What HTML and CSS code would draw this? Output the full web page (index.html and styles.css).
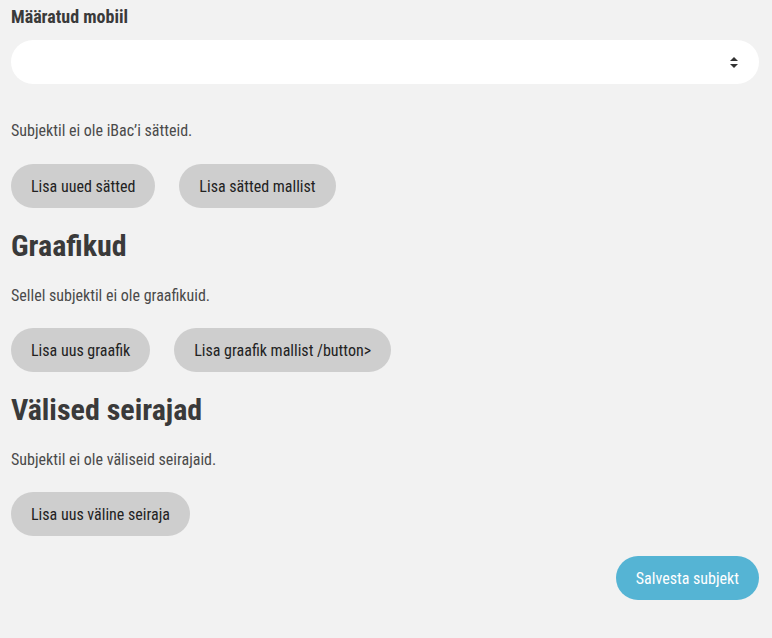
FILE: index.html
```html
<!DOCTYPE html>
<html lang="et">
<head>
<meta charset="utf-8">
<link rel="stylesheet" href="styles.css">
</head>
<body>
<main class="page">
  <label class="field-label" for="mobiil">Määratud mobiil</label>
  <div class="select">
    <span class="select-value"></span>
    <svg class="select-arrow" width="8" height="11" viewBox="0 0 8 11"><path d="M4 0 L8 4 H0 Z M4 11 L8 7 H0 Z" fill="#333"/></svg>
  </div>

  <p class="note note-first">Subjektil ei ole iBac’i sätteid.</p>
  <div class="btn-row">
    <button class="btn">Lisa uued sätted</button>
    <button class="btn">Lisa sätted mallist</button>
  </div>

  <h2 class="section-title">Graafikud</h2>
  <p class="note">Sellel subjektil ei ole graafikuid.</p>
  <div class="btn-row">
    <button class="btn">Lisa uus graafik</button>
    <button class="btn">Lisa graafik mallist /button&gt;</button>
  </div>

  <h2 class="section-title">Välised seirajad</h2>
  <p class="note">Subjektil ei ole väliseid seirajaid.</p>
  <div class="btn-row">
    <button class="btn">Lisa uus väline seiraja</button>
  </div>

  <div class="actions">
    <button class="btn btn-primary">Salvesta subjekt</button>
  </div>
</main>
</body>
</html>
```

FILE: styles.css
```css
html, body {
  margin: 0;
  padding: 0;
  background: #f2f2f2;
}
body {
  font-family: "Roboto Condensed", Roboto, "Liberation Sans", sans-serif;
  color: #3d3d3d;
}
.page {
  display: flex;
  flex-direction: column;
  align-items: stretch;
  padding: 5px 13px 0 11px;
}
.field-label {
  font-size: 18px;
  font-weight: 700;
  line-height: 24px;
  color: #3a3a3a;
}
.select {
  margin-top: 11px;
  height: 44px;
  background: #fff;
  border-radius: 22px;
  display: flex;
  align-items: center;
  justify-content: flex-end;
  padding: 0 21px 0 20px;
}
.select-arrow {
  display: block;
}
.note {
  margin: 22px 0 0;
  font-size: 16px;
  line-height: 20px;
  color: #4a4a4a;
}
.note.note-first {
  margin-top: 37px;
}
.section-title + .note {
  margin-top: 20px;
}
.btn-row {
  display: flex;
  gap: 24px;
  margin-top: 22px;
}
.note-first + .btn-row {
  margin-top: 23px;
}
.btn {
  font-family: inherit;
  font-size: 16px;
  height: 44px;
  padding: 0 20px;
  border: none;
  border-radius: 22px;
  background: #cecece;
  color: #222;
  cursor: pointer;
}
.section-title {
  margin: 18px 0 0;
  font-size: 30px;
  line-height: 40px;
  font-weight: 700;
  color: #3a3a3a;
}
.actions {
  display: flex;
  justify-content: flex-end;
  margin-top: 20px;
}
.btn-primary {
  background: #55b4d4;
  color: #fff;
}
```
